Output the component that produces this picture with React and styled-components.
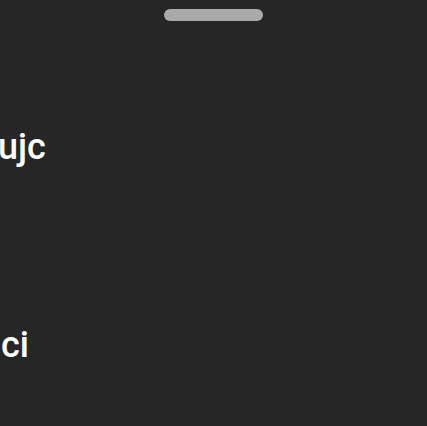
import styled, { createGlobalStyle } from "styled-components";

const GlobalStyle = createGlobalStyle`
  html, body {
    margin: 0;
    padding: 0;
    background: #262626;
  }
`;

const Sheet = styled.div`
  width: 427px;
  height: 426px;
  background: #262626;
  overflow: hidden;
  display: flex;
  flex-direction: column;
  font-family: Roboto, "Noto Sans", sans-serif;
`;

const Handle = styled.div`
  width: 99px;
  height: 12px;
  border-radius: 6px;
  background: #aaaaaa;
  margin: 9px auto 0 auto;
  flex-shrink: 0;
`;

const List = styled.div`
  display: flex;
  flex-direction: column;
  gap: 158px;
  padding-top: 106px;
`;

const Item = styled.div`
  height: 40px;
  display: flex;
  align-items: center;
  white-space: nowrap;
`;

const Label = styled.div`
  color: #ffffff;
  font-size: 36px;
  font-weight: 500;
  line-height: 40px;
  margin-left: ${(p) => p.$offset}px;
`;

const items = [
  { text: "ujc", offset: -2 },
  { text: "ci", offset: 1 }
];

const App = () => {
  return (
    <>
      <GlobalStyle />
      <Sheet>
        <Handle />
        <List>
          {items.map((item, index) => (
            <Item key={index}>
              <Label $offset={item.offset}>{item.text}</Label>
            </Item>
          ))}
        </List>
      </Sheet>
    </>
  );
};

export default App;
